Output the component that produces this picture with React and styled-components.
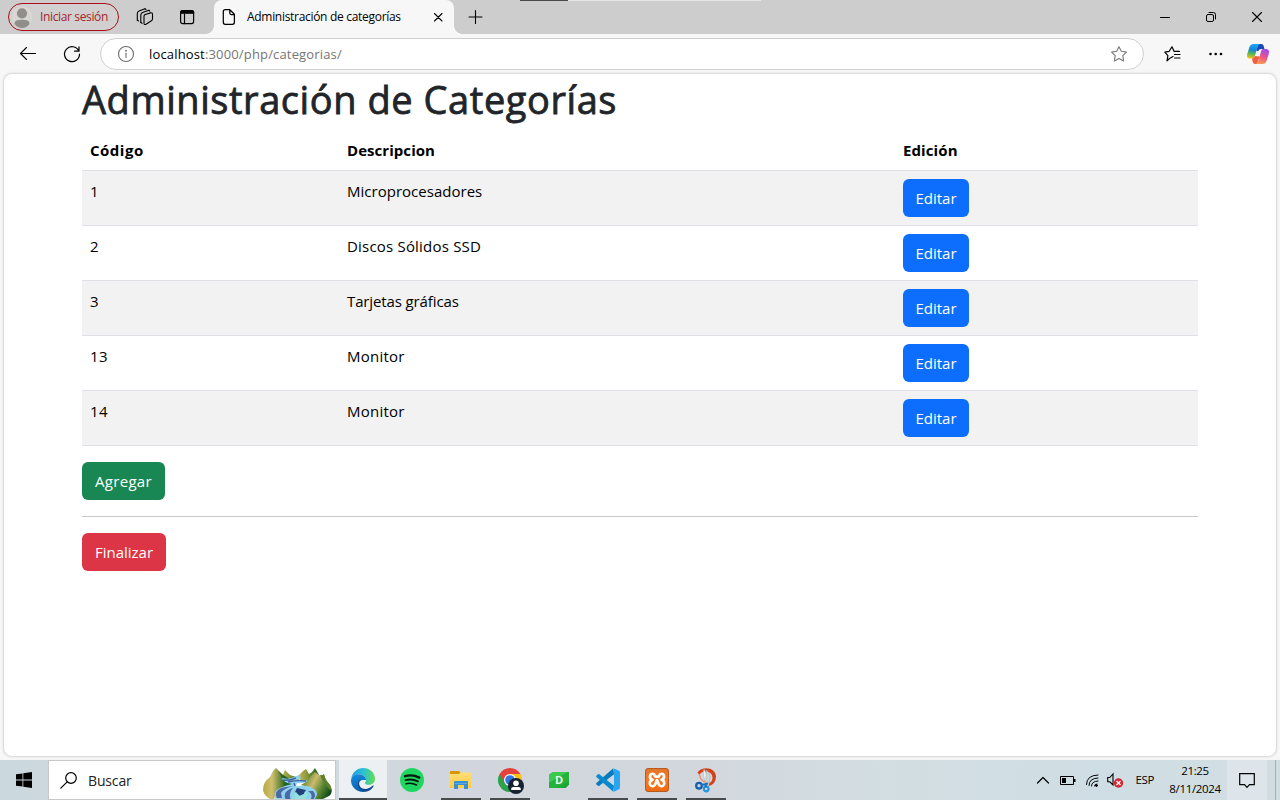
import React from "react";
import styled, { createGlobalStyle } from "styled-components";

const Global = createGlobalStyle`
  * { box-sizing: border-box; }
  html, body { margin: 0; padding: 0; overflow: hidden; }
  body { font-family: "Open Sans", "Noto Sans", sans-serif; color: #000; }
  svg { display: block; flex: none; overflow: visible; }
`;

const Window = styled.div`
  width: 1280px;
  height: 800px;
  display: flex;
  flex-direction: column;
  background: #f7f7f7;
`;

/* ---------- browser chrome ---------- */

const TabStrip = styled.header`
  position: relative;
  height: 34px;
  flex: none;
  display: flex;
  align-items: center;
  background: #cdcdcd;
`;

const LoadingEdge = styled.div`
  position: absolute;
  top: 0;
  left: 520px;
  width: 241px;
  height: 1px;
  background: linear-gradient(90deg, #4a4a4a 48px, #e6e6e6 48px);
`;

const Profile = styled.div`
  width: 111px;
  height: 28px;
  margin: 0 0 0 8px;
  padding-left: 3px;
  display: flex;
  align-items: center;
  gap: 8px;
  border: 1px solid #a80f1a;
  border-radius: 14px;
  background: #d1cfcf;
  color: #a4262c;
`;

const Text = styled.span`
  font-size: ${(p) => p.$size}px;
  line-height: ${(p) => p.$line || 16}px;
  letter-spacing: ${(p) => p.$track || 0}px;
  color: ${(p) => p.$color || "inherit"};
  white-space: nowrap;
`;

const StripIcon = styled.div`
  width: 18px;
  height: 18px;
  margin-left: ${(p) => p.$gap}px;
`;

const Tab = styled.div`
  position: relative;
  width: 240px;
  height: 34px;
  margin-left: 18px;
  padding: 0 10px 0 8px;
  display: flex;
  align-items: center;
  background: #f7f7f7;
  border-radius: 8px 8px 0 0;
  &::before, &::after {
    content: "";
    position: absolute;
    bottom: 0;
    width: 8px;
    height: 8px;
  }
  &::before { left: -8px; background: radial-gradient(circle at 0 0, transparent 7.5px, #f7f7f7 8px); }
  &::after { right: -8px; background: radial-gradient(circle at 100% 0, transparent 7.5px, #f7f7f7 8px); }
`;

const TabTitle = styled(Text)`
  flex: 1;
  margin-left: 11px;
`;

const NewTab = styled.div`
  margin-left: 14px;
`;

const Controls = styled.div`
  margin-left: auto;
  padding-right: 17px;
  display: flex;
  align-items: center;
  gap: 34px;
`;

const Toolbar = styled.div`
  height: 40px;
  flex: none;
  display: flex;
  align-items: center;
  padding: 0 11px 0 19px;
`;

const Reload = styled.div`
  margin: 0 19px 0 26px;
`;

const AddressBar = styled.div`
  width: 1044px;
  height: 32px;
  padding: 0 16px 0 17px;
  display: flex;
  align-items: center;
  background: #fff;
  border: 1px solid #cfcfcf;
  border-radius: 16px;
`;

const Url = styled(Text)`
  flex: 1;
  margin-left: 15px;
  b { color: #000; font-weight: 400; }
`;

const ToolActions = styled.div`
  flex: 1;
  display: flex;
  align-items: center;
  justify-content: space-between;
  padding-left: 20px;
`;

/* ---------- page ---------- */

const Page = styled.main`
  height: 682px;
  flex: none;
  margin: 0 4px 4px;
  padding: 0 78px;
  background: #fff;
  border-radius: 8px;
  box-shadow: 0 0 2px 0.5px #d4d4d4;
`;

const Title = styled.h1`
  height: 48px;
  margin: 0 0 8px;
  font: 400 38px/51px "Open Sans", "Noto Sans", sans-serif;
  letter-spacing: 0.56px;
  -webkit-text-stroke: 0.8px #212529;
  color: #212529;
  white-space: nowrap;
`;

const Table = styled.table`
  width: 1116px;
  margin-bottom: 16px;
  border-collapse: separate;
  border-spacing: 0;
  table-layout: fixed;
  font-size: 15px;
  line-height: 24px;
`;

const Cell = styled.td`
  padding: 8px;
  text-align: left;
  vertical-align: top;
  border-bottom: 1px solid #dee2e6;
  letter-spacing: ${(p) => p.$track || 0}px;
`;

const HeadCell = styled(Cell).attrs({ as: "th" })`
  font-weight: 700;
`;

const Row = styled.tr`
  background: ${(p) => (p.$striped ? "#f2f2f2" : "#fff")};
`;

const Button = styled.button`
  display: block;
  width: ${(p) => p.$width}px;
  height: 38px;
  padding: 0;
  border: 0;
  border-radius: 6px;
  background: ${(p) => p.$color};
  color: #fff;
  font: 400 15px/24px "Open Sans", "Noto Sans", sans-serif;
  letter-spacing: ${(p) => p.$track || 0}px;
`;

const Rule = styled.hr`
  margin: 16px 0;
  height: 1px;
  border: 0;
  background: #c8c9ca;
`;

/* ---------- taskbar ---------- */

const Taskbar = styled.footer`
  height: 40px;
  flex: none;
  display: flex;
  background: linear-gradient(90deg, #cbd8dd 0, #d1dadf 330px, #d1d5dd 440px, #d2d7dd 700px, #d3dde1 850px, #cfdee4 1100px, #d2dde2 1280px);
`;

const Start = styled.div`
  width: 48px;
  padding: 12px 16px;
`;

const Search = styled.div`
  width: 288px;
  margin-right: 3px;
  padding-left: 11px;
  display: flex;
  align-items: center;
  background: #fff;
  border: 1px solid #c6c8c9;
  overflow: hidden;
`;

const SearchLabel = styled(Text)`
  flex: 1;
  margin: 2px 0 0 11px;
`;

const SearchArt = styled.div`
  align-self: flex-end;
  height: 32px;
  margin-right: 2px;
`;

const Apps = styled.div`
  display: flex;
  gap: 1px;
`;

const AppButton = styled.div`
  width: 48px;
  height: 40px;
  display: flex;
  flex-direction: column;
  align-items: center;
  padding-top: 8px;
  background: ${(p) => (p.$active ? "#edf0f2" : "transparent")};
  &::after {
    content: "";
    width: ${(p) => (p.$active ? 48 : 40)}px;
    height: 2px;
    margin-top: 6px;
    background: ${(p) => (p.$running ? "#484b4c" : "transparent")};
  }
`;

const Tray = styled.div`
  margin-left: auto;
  display: flex;
  align-items: center;
`;

const TrayItem = styled.div`
  margin-right: ${(p) => p.$gap}px;
`;

const Language = styled(Text)`
  display: block;
  margin: 0 9px 1px 0;
`;

const Clock = styled.div`
  width: 64px;
  display: flex;
  flex-direction: column;
  align-items: center;
`;

const Notifications = styled.div`
  width: 40px;
  height: 40px;
  display: flex;
  align-items: center;
  justify-content: center;
  background: #dde5ea;
`;

const ShowDesktop = styled.div`
  width: 5px;
  height: 40px;
  margin-left: 8px;
  border-left: 1px solid #a5afb4;
`;

/* ---------- icons ---------- */

const Line = ({ w = 16, h = 16, sw = 1, color = "#000", children }) => (
  <svg width={w} height={h} viewBox={`0 0 ${w} ${h}`} fill="none" stroke={color} strokeWidth={sw} strokeLinecap="round" strokeLinejoin="round">
    {children}
  </svg>
);

const Avatar = () => (
  <svg width="20" height="22" viewBox="0 0 20 22">
    <circle cx="10" cy="11" r="10.5" fill="#d9d7d4" />
    <circle cx="10" cy="7.3" r="5.1" fill="#908d8a" />
    <path d="M2.500 18C2.500 14.5 5.500 13.8 10 13.8S17.500 14.5 17.500 18C15.500 20.500 13 22 10 22S4.500 20.500 2.500 18Z" fill="#908d8a" />
  </svg>
);

const Workspaces = () => (
  <Line w={18} h={18} sw={1.1}>
    <path d="M9.200 6.500 14.500 4.900Q16.500 4.400 16.500 6.200V10.700Q16.500 12 15.400 12.800L10 16.300Q8 17.200 8 15V8.200Q8 7 9.200 6.500Z" />
    <path d="M4.800 14.400V7.300Q4.800 5.200 6.500 4.500L13 2.300" />
    <path d="M1.300 12V5.600Q1.300 3.500 3 2.900L9 .8" />
    <path d="M4.800 14.400 6 15.300M1.300 12 2.500 13M13 2.300 13.700 3M9 .8 10 1.600" />
  </Line>
);

const VerticalTabs = () => (
  <Line w={18} h={18} sw={1.2}>
    <rect x="2.600" y="2.600" width="13" height="13" rx="2" />
    <path d="M2.600 4.500Q2.600 2.600 4.600 2.600H13.600Q15.600 2.600 15.600 4.500V5.200H2.600Z" fill="#000" />
    <path d="M6.500 6V15.600" />
  </Line>
);

const Doc = () => (
  <Line w={14} h={16} sw={1.25}>
    <path d="M3.200 .7H7.800L12.400 5.300V13.200Q12.400 15.300 10.400 15.300H3.200Q1.300 15.300 1.300 13.300V2.600Q1.300 .7 3.200 .7ZM7.800 .9V4Q7.800 5.500 9.300 5.500H12.200" />
  </Line>
);

const starPath = "M8 .8 10.300 5.300 15.400 6.100 11.800 9.700 12.600 14.900 8 12.600 3.400 14.900 4.200 9.700 .6 6.100 5.700 5.300Z";

const Copilot = () => (
  <svg width="22" height="20" viewBox="0 0 22 20">
    <defs>
      <linearGradient id="cpA" x1=".5" y1="0" x2=".3" y2="1">
        <stop offset="0" stopColor="#19a8ee" /><stop offset=".4" stopColor="#1485dc" /><stop offset=".66" stopColor="#53b552" /><stop offset="1" stopColor="#f4c51b" />
      </linearGradient>
      <linearGradient id="cpB" x1=".6" y1="0" x2=".3" y2="1">
        <stop offset="0" stopColor="#a24bed" /><stop offset=".5" stopColor="#ec538b" /><stop offset="1" stopColor="#ff9e4c" />
      </linearGradient>
    </defs>
    <path d="M11 0H14.500Q16 0 16.600 1.700L17.500 5H14Q12 5 11.300 7L9.300 7Z" fill="#1948bb" />
    <path d="M6.500 0H13Q11.300 .5 10.700 2.500L7.700 12.500Q7 14.500 5 14.500H2.500Q-.5 14.500 .1 10.500L2.300 3.500Q3.300 0 6.500 0Z" fill="url(#cpA)" />
    <path d="M5 14.500Q7 14.500 7.700 12.500L8 12 12.700 12.500 10 20H8Q6.300 20 5.600 17.500Z" fill="#f15f42" />
    <path d="M15.500 5H19.500Q22.600 5.500 21.900 9.300L19.700 16.500Q18.500 20 15.400 20H8.500Q10.500 19.700 11.200 17.500L14 7.500Q14.500 5.800 15.500 5Z" fill="url(#cpB)" />
  </svg>
);

const River = () => (
  <svg width="70" height="33" viewBox="0 0 70 33">
    <defs>
      <linearGradient id="hillA"><stop offset="0" stopColor="#b9a945" /><stop offset=".3" stopColor="#cfc070" /><stop offset=".65" stopColor="#4f7a2a" /><stop offset="1" stopColor="#0f5220" /></linearGradient>
      <linearGradient id="hillB" x1="0" y1=".2" x2="1" y2=".7"><stop offset="0" stopColor="#3f7428" /><stop offset=".4" stopColor="#cdbb6c" /><stop offset=".68" stopColor="#5c8834" /><stop offset="1" stopColor="#0a4518" /></linearGradient>
      <linearGradient id="peak"><stop offset="0" stopColor="#c9b95c" /><stop offset=".5" stopColor="#7c9236" /><stop offset="1" stopColor="#14571f" /></linearGradient>
    </defs>
    <path d="M18 12 22 3 27 8 33 10 37 11 29 19H18Z" fill="url(#peak)" />
    <path d="M35 9 40 4 43 2 46 7 49 5 52 1 56 8 54 16 38 15Z" fill="url(#peak)" />
    <path d="M0 23Q0 15 7 10L10 4 13 1 17 5 20 8 25 11 30 17Q20 19 14 25L11 32H7Q1 29 0 23Z" fill="url(#hillA)" />
    <path d="M15 4 20 8 25 11 29 17 21 19Q20 11 15 4Z" fill="#1b5d23" opacity=".7" />
    <path d="M38 18Q45 14 48 9L52 5 56 8Q59 9 61 7 62 13 67 18 71 26 66 29L58 33H46Q50 25 45 20Z" fill="url(#hillB)" />
    <path d="M57 8Q60 9 61 7 62 13 67 18L69 24Q62 20 57 8Z" fill="#5c7f2c" />
    <path d="M19 11Q26 13 31 10L36 8 38 11 34 13Q42 12 45 14 40 17 34 16L33 19Q46 18 51 22 57 26 51 33H13Q9 25 17 21 24 18 29 17 19 15 19 11Z" fill="#8ed3ee" />
    <path d="M20 13Q26 14 33 11M25 15Q34 13 43 14M31 16 32 19" stroke="#405f9e" strokeWidth="1.400" fill="none" />
    <path d="M14 31Q10 24 20 20.500L30 19Q20 22 18 26L19 31ZM23 33Q19 26 27 22L30 21Q25 26 28 33ZM47 33Q51 28 45 24L50 24Q54 28 50 33Z" fill="#4a69a6" />
    <path d="M34 21 43 23 41 27 37 29 32 25Z" fill="#243f79" />
    <path d="M33 33Q29 28 33 25L36 29 41 27 42 24Q47 28 41 33Z" fill="#93e0dc" />
  </svg>
);

const EdgeLogo = () => (
  <svg width="24" height="24" viewBox="0 0 24 24">
    <defs>
      <linearGradient id="eg1" x1="0" y1=".3" x2="1" y2=".4"><stop offset="0" stopColor="#229bdf" /><stop offset=".5" stopColor="#2ac2d2" /><stop offset="1" stopColor="#62da57" /></linearGradient>
      <linearGradient id="eg2" x1="0" y1="0" x2=".3" y2="1"><stop offset="0" stopColor="#178bdc" /><stop offset="1" stopColor="#0b62b6" /></linearGradient>
    </defs>
    <path d="M.3 10.500C1.200 4.400 6.200 0 12.200 0 19 0 24 5 24 10.800 24 14.500 21.500 16.800 18 16.800 15 16.800 13.800 15.600 14 14.700 14.300 14 15 13.500 15 12 15 9 11.500 6.300 7.300 6.300 4 6.300 1.700 8.200 .3 10.500Z" fill="url(#eg1)" />
    <path d="M0 12C1 8 4 6.300 7.300 6.300 11.500 6.300 15 9 15 12H12C9 12 7.600 14.500 8.100 17 8.600 20.500 11.500 23.200 15 23.600 13.500 24 12.700 24 12 24 5.500 24-.2 18.800 0 12Z" fill="url(#eg2)" />
    <path d="M9.900 11.200C7 13 7.600 19 11.600 20.500 15 21.800 18.500 20.400 21.800 17.600 22.500 17.100 23 17.700 22.600 18.300 20.600 21.600 17.600 23.500 14.500 23.800 10 23.300 6.600 19.700 6.900 15.400 7.100 13.200 8.200 11.700 9.900 11.200Z" fill="#104b91" />
  </svg>
);

const Spotify = () => (
  <svg width="24" height="24" viewBox="0 0 24 24" fill="none" strokeLinecap="round">
    <circle cx="12" cy="12" r="12" fill="#1ed760" />
    <path d="M5 8.200Q12.300 6 19.300 9.600" stroke="#071b0d" strokeWidth="2.400" />
    <path d="M5.500 12.100Q12 10.300 17.900 13.400" stroke="#071b0d" strokeWidth="2" />
    <path d="M6 15.700Q11.500 14.300 16.600 17" stroke="#071b0d" strokeWidth="1.600" />
  </svg>
);

const Explorer = () => (
  <svg width="24" height="24" viewBox="0 0 24 24">
    <defs><linearGradient id="fold" x2="0" y2="1"><stop stopColor="#ffe07f" /><stop offset="1" stopColor="#ffca3d" /></linearGradient></defs>
    <path d="M2 3H10L12 4.500H21Q22 4.500 22 6V20H1V4Q1 3 2 3Z" fill="url(#fold)" />
    <path d="M2 3H10L11.500 4.500 10 6H1V4Q1 3 2 3Z" fill="#d99505" />
    <path d="M6 13H18Q19 13 19 14V21H15V17H9V21H5V14Q5 13 6 13Z" fill="#378fd4" />
    <path d="M5.500 15.500H18.500" stroke="#65b4e9" strokeWidth=".7" />
  </svg>
);

const Chrome = () => (
  <svg width="24" height="24" viewBox="0 0 24 24">
    <path d="M12 12 1.600 6A12 12 0 0 1 22.400 6Z" fill="#e6423b" />
    <path d="M12 12 1.600 6A12 12 0 0 0 12 24L17.200 15Z" fill="#2ba24c" />
    <path d="M12 6H22.400A12 12 0 0 1 12 24L17.200 15Z" fill="#fbc116" />
    <path d="M1.600 6 7 15.300 12 6H22.400Z" fill="#e6423b" />
    <circle cx="12" cy="12" r="6" fill="#fff" /><circle cx="12" cy="12" r="4.800" fill="#3276e0" />
    <circle cx="18" cy="18" r="8" fill="#172231" />
    <circle cx="18" cy="15.300" r="2.800" fill="#fff" />
    <path d="M13.200 22V20.800Q13.200 18.900 15.400 18.900H20.600Q22.800 18.900 22.800 20.800V22Z" fill="#fff" />
  </svg>
);

const LetterBadge = styled.div`
  width: 20px;
  height: 16px;
  margin: 4px 0;
  background: linear-gradient(150deg, #3bca4f 0 38%, #24b13c 39% 68%, #159a30 100%);
  clip-path: polygon(18% 0, 100% 0, 100% 78%, 84% 100%, 0 100%, 0 16%);
  color: #eaffed;
  font: 700 11px/16px "Open Sans", sans-serif;
  text-align: center;
`;

const VSCode = () => (
  <svg width="24" height="24" viewBox="0 0 24 24">
    <path d="M17.300 .3 18 6.300 3.300 17.800Q2.600 18.200 2 17.700L.4 16.300Q-.2 15.700 .4 15.100Z" fill="#0879bd" />
    <path d="M.4 8.900Q-.2 8.300 .4 7.700L2 6.300Q2.600 5.800 3.300 6.200L18 17.700 17.300 23.700Z" fill="#078bd0" />
    <path d="M17.300 .2 23 2.700Q24 3.200 24 4.200V19.800Q24 20.800 23 21.300L17.300 23.900Q16.600 24 16.300 23.500 18 24.500 18 22.500V1.500Q18-.3 16.300 .5Q16.600 0 17.300 .2Z" fill="#2aa5ef" />
  </svg>
);

const Xampp = () => (
  <svg width="24" height="24" viewBox="0 0 24 24" fill="none">
    <defs><linearGradient id="xa" x2="0" y2="1"><stop stopColor="#df762a" /><stop offset=".5" stopColor="#fb7821" /><stop offset="1" stopColor="#ee6a13" /></linearGradient></defs>
    <rect x=".5" y=".5" width="23" height="23" rx="2.500" fill="url(#xa)" stroke="#b65b20" />
    <path d="M8.500 6C4.500 4.500 3.500 10.500 7.500 11.800 3.300 13 4.300 19.300 8.500 18 11.500 17 10.500 13 12 12 13.500 13 12.500 17 15.500 18 19.700 19.300 20.700 13 16.500 11.800 20.500 10.500 19.500 4.500 15.500 6 14 6.500 14.600 8.600 13.400 8.600H10.600C9.400 8.600 10 6.500 8.500 6Z" stroke="#fff" strokeWidth="2.600" strokeLinejoin="round" />
  </svg>
);

const Snip = () => (
  <svg width="24" height="24" viewBox="-1.5 0 24 24" fill="none">
    <path d="M2 4.500Q5 .3 11 .3 19 .5 20.500 8 20.500 16.500 13 18L14 15Q17 13.500 17 9.500 16.500 4 10.500 3.500 5 3.500 4 7Z" fill="#d5421a" />
    <path d="M4 6.500Q4.500 12 9.500 14" stroke="#e69679" strokeWidth="1.500" />
    <path d="M8.500 1Q6 7 11 15.500L14 14.500Q12 7 8.500 1Z" fill="#eef0f0" stroke="#a3abae" strokeWidth=".5" />
    <path d="M11 2Q17.500 8 12.500 16L10 14.500Z" fill="#cdd3d5" stroke="#a3abae" strokeWidth=".5" />
    <circle cx="3.500" cy="17.700" r="2.800" stroke="#1a5fae" strokeWidth="2.300" />
    <circle cx="10.700" cy="21" r="2.300" stroke="#2496e2" strokeWidth="2.200" />
    <path d="M6 17 12.500 15.500M10.500 19 10 15" stroke="#1c74bd" strokeWidth="2.200" />
  </svg>
);

const apps = [
  { id: "edge", icon: <EdgeLogo />, running: true, active: true },
  { id: "spotify", icon: <Spotify /> },
  { id: "explorer", icon: <Explorer />, running: true },
  { id: "chrome", icon: <Chrome />, running: true },
  { id: "d", icon: <LetterBadge>D</LetterBadge> },
  { id: "code", icon: <VSCode />, running: true },
  { id: "xampp", icon: <Xampp />, running: true },
  { id: "snip", icon: <Snip />, running: true },
];

const categories = [
  { code: "1", name: "Microprocesadores", track: 0.02 },
  { code: "2", name: "Discos Sólidos SSD", track: 0.2 },
  { code: "3", name: "Tarjetas gráficas", track: -0.12 },
  { code: "13", name: "Monitor", track: 0.25 },
  { code: "14", name: "Monitor", track: 0.25 },
];

export default function App() {
  return (
    <Window>
      <Global />
      <TabStrip>
        <LoadingEdge />
        <Profile>
          <Avatar />
          <Text $size={12} $track={-0.36}>Iniciar sesión</Text>
        </Profile>
        <StripIcon $gap={17}><Workspaces /></StripIcon>
        <StripIcon $gap={24}><VerticalTabs /></StripIcon>
        <Tab>
          <Doc />
          <TabTitle $size={12} $track={-0.3}>Administración de categorías</TabTitle>
          <Line w={12} h={12} sw={1.1}><path d="M2.500 2.500 10 10M10 2.500 2.500 10" /></Line>
        </Tab>
        <NewTab><Line w={14} h={14} sw={1.1}><path d="M7.500 .5V13.500M1 7H14" /></Line></NewTab>
        <Controls>
          <Line w={12} h={12}><path d="M1.500 6.500H10.500" /></Line>
          <Line w={12} h={12} sw={1}>
            <rect x="1.500" y="3.500" width="7" height="7" rx="1.500" />
            <path d="M4 1.500H8.500Q10.500 1.500 10.500 3.500V8" />
          </Line>
          <Line w={12} h={12} sw={1.1}><path d="M1.500 1.500 10.500 10.500M10.500 1.500 1.500 10.500" /></Line>
        </Controls>
      </TabStrip>

      <Toolbar>
        <Line w={18} h={16} sw={1.1}><path d="M1.500 7.500H16.500M7.500 1.500 1.500 7.500 7.500 13.500" /></Line>
        <Reload>
          <Line w={18} h={18} sw={1.2}><path d="M15.800 6A7.500 7.500 0 1 0 16.500 9M16 1.800V6.200H11.600" /></Line>
        </Reload>
        <AddressBar>
          <Line w={16} h={16} color="#6e6e6e" sw={1.1}>
            <circle cx="8" cy="8" r="7.500" /><path d="M8 7.200V11.500" /><circle cx="8" cy="4.700" r=".4" />
          </Line>
          <Url $size={13} $track={0.16} $color="#757575"><b>localhost</b>:3000/php/categorias/</Url>
          <Line w={16} h={16} color="#777" sw={1.1}><path d={starPath} /></Line>
        </AddressBar>
        <ToolActions>
          <Line w={17} h={16} sw={1.2}>
            <path d="M9 10.500 5.500 12.500 3 14.900 3.900 9.700 .8 6.100 5.200 5.300 8 .8 10 5.300H15.500M10.500 8.500H16M10.500 12H16" />
          </Line>
          <svg width="14" height="16" viewBox="0 0 14 16">
            <circle cx="3.500" cy="8" r="1.300" /><circle cx="8.700" cy="8" r="1.300" /><circle cx="14" cy="8" r="1.300" />
          </svg>
          <Copilot />
        </ToolActions>
      </Toolbar>

      <Page>
        <Title>Administración de Categorías</Title>
        <Table>
          <colgroup><col width="257" /><col width="556" /><col width="303" /></colgroup>
          <thead>
            <tr><HeadCell $track={0.5}>Código</HeadCell><HeadCell $track={0.05}>Descripcion</HeadCell><HeadCell $track={0.1}>Edición</HeadCell></tr>
          </thead>
          <tbody>
            {categories.map(({ code, name, track }, i) => (
              <Row key={code} $striped={i % 2 === 0}>
                <Cell $track={0.3}>{code}</Cell>
                <Cell $track={track}>{name}</Cell>
                <Cell><Button $width={66} $color="#0d6efd">Editar</Button></Cell>
              </Row>
            ))}
          </tbody>
        </Table>
        <Button $width={83} $color="#198754" $track={0.3}>Agregar</Button>
        <Rule />
        <Button $width={84} $color="#dc3545">Finalizar</Button>
      </Page>

      <Taskbar>
        <Start>
          <svg width="16" height="16" viewBox="0 0 16 16"><path d="M0 2.300 6.500 1.400V7.600H0ZM7.300 1.300 16 0V7.600H7.300ZM0 8.400H6.500V14.600L0 13.700ZM7.300 8.400H16V16L7.300 14.700Z" /></svg>
        </Start>
        <Search>
          <Line w={17} h={17} sw={1.2}><circle cx="11" cy="6" r="5.300" /><path d="M7.200 9.800 .8 16.200" /></Line>
          <SearchLabel $size={14} $track={-0.15} $color="#222">Buscar</SearchLabel>
          <SearchArt><River /></SearchArt>
        </Search>
        <Apps>
          {apps.map((a) => <AppButton key={a.id} $active={a.active} $running={a.running}>{a.icon}</AppButton>)}
        </Apps>
        <Tray>
          <TrayItem $gap={10}><Line w={14} h={10} sw={1.2}><path d="M1.500 8 7 2.500 12.500 8" /></Line></TrayItem>
          <TrayItem $gap={9}>
            <svg width="16" height="10" viewBox="0 0 16 10"><path d="M.5 1.500H13.500V9.500H.5Z" fill="none" stroke="#000" /><path d="M2 3H6V8H2ZM14 4H15.500V7H14Z" /></svg>
          </TrayItem>
          <TrayItem $gap={8}>
            <Line w={14} h={14} sw={1}>
              <path d="M1.500 11.500Q1.500 2.300 13 2M4 12.500Q4 5.300 13 5M6.500 13Q6.500 8.300 13 8" />
              <path d="M9.500 13Q9.500 11 12 11" /><circle cx="11.500" cy="12.500" r="1" fill="#000" />
            </Line>
          </TrayItem>
          <TrayItem $gap={12}>
            <svg width="17" height="16" viewBox="0 0 17 16" fill="none">
              <path d="M.7 5.500H2.800L6 2V13L2.800 9.800H.7Z" stroke="#000" strokeWidth="1.100" />
              <circle cx="11.500" cy="11" r="4.700" fill="#d62631" /><path d="M9.500 9 13.500 13M13.500 9 9.500 13" stroke="#fff" strokeWidth="1.300" />
            </svg>
          </TrayItem>
          <Language $size={11.5} $track={-0.4}>ESP</Language>
          <Clock>
            <Text $size={11.5} $track={-0.4} $line={18}>21:25</Text>
            <Text $size={11.5} $track={-0.35} $line={18}>8/11/2024</Text>
          </Clock>
          <Notifications>
            <Line w={16} h={16} sw={1.2}><path d="M.7 1.700H15.300V12.700H10.500L8 15.300 5.500 12.700H.7Z" strokeLinejoin="miter" /></Line>
          </Notifications>
          <ShowDesktop />
        </Tray>
      </Taskbar>
    </Window>
  );
}
